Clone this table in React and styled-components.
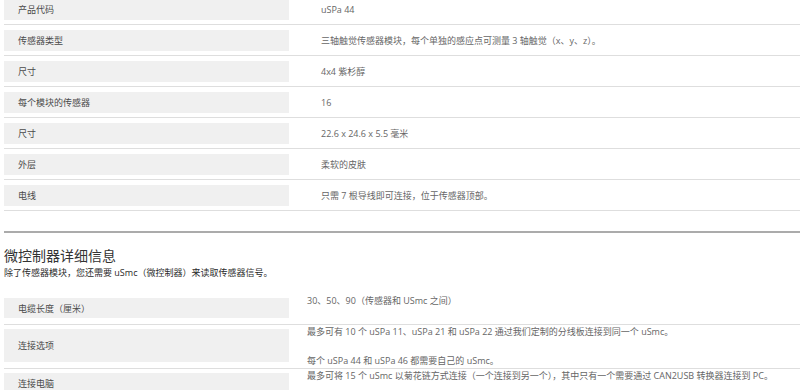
import React from 'react';
import styled, { createGlobalStyle } from 'styled-components';

const specs = [
  { label: '产品代码', value: 'uSPa 44' },
  { label: '传感器类型', value: '三轴触觉传感器模块，每个单独的感应点可测量 3 轴触觉（x、y、z）。' },
  { label: '尺寸', value: '4x4 紫杉醇' },
  { label: '每个模块的传感器', value: '16' },
  { label: '尺寸', value: '22.6 x 24.6 x 5.5 毫米' },
  { label: '外层', value: '柔软的皮肤' },
  { label: '电线', value: '只需 7 根导线即可连接，位于传感器顶部。' },
];

const controller = [
  { label: '电缆长度（厘米）', value: ['30、50、90（传感器和 USmc 之间）'] },
  {
    label: '连接选项',
    value: [
      '最多可有 10 个 uSPa 11、uSPa 21 和 uSPa 22 通过我们定制的分线板连接到同一个 uSmc。',
      '每个 uSPa 44 和 uSPa 46 都需要自己的 uSmc。',
    ],
  },
  {
    label: '连接电脑',
    value: ['最多可将 15 个 uSmc 以菊花链方式连接（一个连接到另一个），其中只有一个需要通过 CAN2USB 转换器连接到 PC。'],
  },
];

export default function App() {
  return (
    <>
      <GlobalStyle />
      <Page>
        <SpecTable>
          {specs.map((s, i) => (
            <SpecRow key={i}>
              <Label>{s.label}</Label>
              <Value>{s.value}</Value>
            </SpecRow>
          ))}
        </SpecTable>

        <Section>
          <Heading>微控制器详细信息</Heading>
          <Intro>除了传感器模块，您还需要 uSmc（微控制器）来读取传感器信号。</Intro>
          <SpecTable>
            {controller.map((s, i) => (
              <DetailRow key={i}>
                <DetailLabel>{s.label}</DetailLabel>
                <DetailValue>
                  {s.value.map((p, j) => (
                    <Para key={j}>{p}</Para>
                  ))}
                </DetailValue>
              </DetailRow>
            ))}
          </SpecTable>
        </Section>
      </Page>
    </>
  );
}

const GlobalStyle = createGlobalStyle`
  body {
    margin: 0;
    background: #fff;
    font-family: "Open Sans", "Noto Sans CJK SC", sans-serif;
    font-size: 9px;
    color: #555;
    overflow: hidden;
  }
`;

const Page = styled.div`
  margin-top: -6px;
  padding-left: 4px;
`;

const SpecTable = styled.div`
  display: flex;
  flex-direction: column;
`;

const SpecRow = styled.div`
  display: flex;
  align-items: center;
  padding: 5px 0 4px;
  border-bottom: 1px solid #dedede;
`;

const Label = styled.div`
  display: flex;
  align-items: center;
  flex: 0 0 285px;
  height: 21px;
  padding-left: 14px;
  box-sizing: border-box;
  background: #f0f0f0;
  color: #4a4a4a;
`;

const Value = styled.div`
  margin-left: 32px;
  color: #666;
`;

const Section = styled.section`
  margin-top: 20px;
  border-top: 2px solid #ababab;
`;

const Heading = styled.h2`
  margin: 14px 0 0;
  font-size: 14px;
  line-height: 18px;
  font-weight: 400;
  color: #333;
`;

const Intro = styled.p`
  margin: 2px 0 16px;
  line-height: 12px;
  color: #2a2a2a;
`;

const DetailRow = styled.div`
  display: flex;
  align-items: flex-start;
  padding: 0 0 1px;
  border-bottom: 1px solid #dedede;

  & + & {
    padding-top: 1px;
  }
`;

const DetailLabel = styled(Label)`
  align-self: stretch;
  height: auto;
  min-height: 20px;
  margin: 3px 0 5px;
`;

const DetailValue = styled.div`
  margin-left: 18px;
  color: #666;
  line-height: 12px;
`;

const Para = styled.p`
  margin: 0;

  & + & {
    margin-top: 17px;
  }
`;
